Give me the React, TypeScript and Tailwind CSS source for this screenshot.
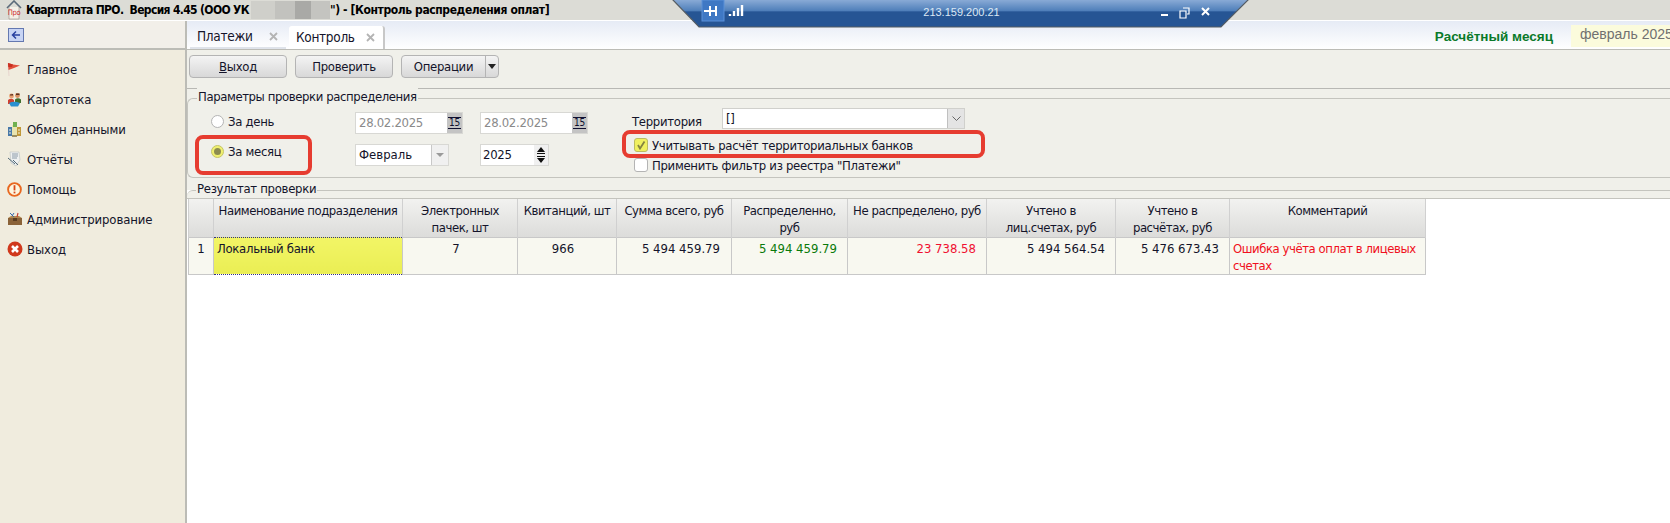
import React from 'react';

const Flag = () => (
  <svg width="15" height="15" viewBox="0 0 15 15">
    <path d="M1 1 L2 14" stroke="#e8d8d0" strokeWidth="1.2" />
    <path d="M1 1 L6 2.5 L13 3.5 L7 6 L1.5 8 Z" fill="#e0503c" />
    <path d="M1 1 L6 2.5 L5 5 L1.3 5 Z" fill="#c83020" />
  </svg>
);

const People = () => (
  <svg width="15" height="15" viewBox="0 0 15 15">
    <circle cx="4.5" cy="4" r="2.4" fill="#e8a070" />
    <circle cx="10.5" cy="3.5" r="2.4" fill="#d89060" />
    <path d="M3 2.5 L6 2 L6 3.5 L3 3.5 Z M9 1.5 L12.5 1.5 L12.5 3 L9 3 Z" fill="#5a3020" />
    <path d="M1 8 Q4 5.5 7 8 L7 12 L1 12 Z" fill="#d04030" />
    <path d="M8 7.5 Q11 5 14 7.5 L14 11 L8 11 Z" fill="#407030" />
    <path d="M2 11 Q7 8.5 13 11 L11 14.5 L4 14.5 Z" fill="#2a90d0" />
  </svg>
);

const Exchange = () => (
  <svg width="15" height="17" viewBox="0 0 15 17">
    <rect x="1" y="6" width="4" height="9" fill="#4878a8" />
    <rect x="5" y="4" width="5" height="11" fill="#e8e4b0" />
    <rect x="10" y="6" width="4" height="9" fill="#c09838" />
    <path d="M6 1 L10 1 L10 6 L6 6 Z" fill="#70b050" />
    <path d="M2 9 h2 M2 12 h2 M11 9 h2 M11 12 h2" stroke="#f0f0e0" strokeWidth="1" />
    <path d="M5 15 L10 15" stroke="#807040" strokeWidth="1.5" />
  </svg>
);

const Report = () => (
  <svg width="15" height="16" viewBox="0 0 15 16">
    <path d="M3 1 L12 1 L13 9 L9 15 L4 12 Z" fill="#eef0f0" stroke="#b8c0c0" strokeWidth="0.6" />
    <path d="M5 3 h6 M5 5 h6 M5 7 h5" stroke="#8090a0" strokeWidth="0.9" />
    <path d="M1 7 L8 13 M6 9 L11 14" stroke="#506878" strokeWidth="1" />
  </svg>
);

const Help = () => (
  <svg width="15" height="15" viewBox="0 0 15 15">
    <circle cx="7.5" cy="7.5" r="6.4" fill="#fdf6e0" stroke="#e86820" strokeWidth="1.9" />
    <rect x="6.6" y="3.2" width="1.8" height="5.2" fill="#d84818" />
    <rect x="6.6" y="9.6" width="1.8" height="1.8" fill="#d84818" />
  </svg>
);

const Tools = () => (
  <svg width="16" height="14" viewBox="0 0 16 14">
    <path d="M1 6 L15 6 L15 13 L1 13 Z" fill="#8a6238" />
    <path d="M1 6 L4 4 L12 4 L15 6 Z" fill="#b08850" />
    <rect x="6" y="6" width="4" height="3" fill="#5a3c20" />
    <path d="M3 1 L7 5 M7 1 L5 4" stroke="#3868a8" strokeWidth="1" />
    <path d="M11 1 L10 5" stroke="#c84030" strokeWidth="1.2" />
  </svg>
);

const ExitIcon = () => (
  <svg width="16" height="16" viewBox="0 0 16 16">
    <circle cx="8" cy="8" r="7.5" fill="#d0381c" />
    <path d="M5 5 L11 11 M11 5 L5 11" stroke="#fff" strokeWidth="2.6" />
  </svg>
);

const menu = [
  { label: 'Главное', icon: <Flag /> },
  { label: 'Картотека', icon: <People /> },
  { label: 'Обмен данными', icon: <Exchange /> },
  { label: 'Отчёты', icon: <Report /> },
  { label: 'Помощь', icon: <Help /> },
  { label: 'Администрирование', icon: <Tools /> },
  { label: 'Выход', icon: <ExitIcon /> },
];

const Tab = ({ label, active }: { label: string; active?: boolean }) => (
  <div
    className={`w-[96px] h-[23px] pl-[7px] pr-[8px] flex items-center justify-between rounded-t-[3px] ${
      active ? 'bg-white border-r-2 border-[#c8c8c8]' : 'border-b-2 border-[#dfe3ea]'
    }`}
  >
    <span>{label}</span>
    <svg width="9" height="9" viewBox="0 0 9 9">
      <path d="M1 1 L8 8 M8 1 L1 8" stroke="#b4b4b4" strokeWidth="1.8" />
    </svg>
  </div>
);

const Btn = ({ children }: { children: React.ReactNode }) => (
  <div className="w-[98px] h-[23px] flex items-center justify-center rounded-[4px] border border-[#b4b4b4] bg-gradient-to-b from-[#f4f4f4] to-[#d8d8d8]">
    {children}
  </div>
);

const DateField = () => (
  <div className="w-[108px] h-[22px] flex bg-white border border-[#d8d8d4] text-[#8a8a8a]">
    <span className="flex-1 pl-[3px] leading-[20px]">28.02.2025</span>
    <div className="w-[15px] bg-[#c4c4c4] flex items-center justify-center">
      <span className="text-[10px] leading-[10px] text-[#101030] border-b border-t border-[#101030] px-[1px]">15</span>
    </div>
  </div>
);

const Radio = ({ label, checked }: { label: string; checked?: boolean }) => (
  <div className="h-[22px] flex items-center">
    <div
      className={`w-[13px] h-[13px] rounded-full border flex items-center justify-center ${
        checked ? 'bg-[#f0f070] border-[#c4c468]' : 'bg-white border-[#b4b4b4]'
      }`}
    >
      {checked && <div className="w-[7px] h-[7px] rounded-full bg-[#8c8c50]" />}
    </div>
    <span className="ml-[4px]">{label}</span>
  </div>
);

const Check = ({ label, checked }: { label: string; checked?: boolean }) => (
  <div className="h-[14px] flex items-center">
    <div
      className={`w-[14px] h-[14px] rounded-[3px] border flex items-center justify-center ${
        checked ? 'bg-[#f0f060] border-[#bcbc60]' : 'bg-white border-[#b4b4b4]'
      }`}
    >
      {checked && (
        <svg width="10" height="10" viewBox="0 0 10 10">
          <path d="M2 5 L4 8.5 L8.5 1.5" fill="none" stroke="#848440" strokeWidth="1.8" />
        </svg>
      )}
    </div>
    <span className="ml-[4px]">{label}</span>
  </div>
);

const columns: { label: React.ReactNode; width: string }[] = [
  { label: '', width: 'w-[25px]' },
  { label: 'Наименование подразделения', width: 'w-[189px]' },
  { label: <>Электронных<br />пачек, шт</>, width: 'w-[115px]' },
  { label: 'Квитанций, шт', width: 'w-[99px]' },
  { label: 'Сумма всего, руб', width: 'w-[115px]' },
  { label: <>Распределенно,<br />руб</>, width: 'w-[116px]' },
  { label: 'Не распределено, руб', width: 'w-[139px]' },
  { label: <>Учтено в<br />лиц.счетах, руб</>, width: 'w-[129px]' },
  { label: <>Учтено в<br />расчётах, руб</>, width: 'w-[114px]' },
  { label: 'Комментарий', width: 'w-[196px]' },
];

export default function App() {
  return (
    <div className="relative w-[1670px] h-[523px] overflow-hidden flex flex-col bg-white text-[13px] leading-[17px] tracking-[-0.3px] text-[#14142a] font-['DejaVu_Sans_Condensed','Noto_Sans',sans-serif]">
      {/* title bar */}
      <div className="h-[21px] shrink-0 bg-[#dcdcd6] border-b border-white flex items-center pl-[6px] font-bold text-[12px] text-black">
        <svg width="16" height="20" viewBox="0 0 16 20" className="shrink-0">
          <path d="M1 8 L8 1 L15 8" fill="none" stroke="#5a6a7a" strokeWidth="1.6" />
          <path d="M3 7 L3 19 L13 19 L13 7" fill="#f4f0e8" stroke="#9a8a80" strokeWidth="0.6" />
          <text x="8" y="15" textAnchor="middle" fontSize="7.5" fontWeight="400" fill="#d03030">Про</text>
        </svg>
        <span className="ml-[4px] w-[225px] shrink-0 whitespace-pre tracking-[-0.65px]">Квартплата ПРО.  Версия 4.45 (ООО УК</span>
        <div className="flex h-[18px] w-[79px] shrink-0">
          <div className="w-[24px] bg-[#cfcfca]" />
          <div className="w-[20px] bg-[#c2c2be]" />
          <div className="w-[16px] bg-[#a9a9a6]" />
          <div className="w-[19px] bg-[#c4c4c0]" />
        </div>
        <span className="whitespace-pre tracking-[-0.4px]">") - [Контроль распределения оплат]</span>
      </div>

      <div className="flex flex-1 min-h-0">
        {/* left menu */}
        <aside className="w-[185px] shrink-0 flex flex-col bg-[#f0ecde] tracking-[-0.1px]">
          <div className="h-[29px] shrink-0 bg-[#f2efe9] border-b-2 border-[#bcbcb6] pl-[8px] flex items-center">
            <svg width="16" height="15" viewBox="0 0 16 15">
              <rect x="0.5" y="1.5" width="15" height="13" fill="#c8d4f4" stroke="#6478b0" />
              <path d="M12 8 L5 8 M8 4.5 L4.5 8 L8 11.5" fill="none" stroke="#2840a0" strokeWidth="1.5" />
            </svg>
          </div>
          <nav className="flex flex-col pt-[4px]">
            {menu.map(item => (
              <div key={item.label} className="h-[30px] flex items-center">
                <div className="w-[27px] shrink-0 pl-[7px] flex items-center">{item.icon}</div>
                <span>{item.label}</span>
              </div>
            ))}
          </nav>
        </aside>

        <main className="flex-1 min-w-0 flex flex-col border-l-2 border-[#bcbcb6]">
          {/* tabs row */}
          <div className="h-[29px] shrink-0 flex items-end justify-between bg-gradient-to-b from-[#e6ebf5] to-white border-b border-[#bcbcb6] pl-[3px]">
            <div className="flex gap-[3px] text-[13.5px]">
              <Tab label="Платежи" />
              <Tab label="Контроль" active />
            </div>
            <div className="flex items-start h-[25px] self-start mt-[4px] tracking-normal">
              <span className="mt-[3px] font-['Liberation_Sans',sans-serif] font-bold text-[13.5px] text-[#0a7a2a]">Расчётный месяц</span>
              <div className="ml-[18px] w-[99px] h-[22px] bg-[#fbfbdc] pl-[9px] overflow-hidden whitespace-nowrap font-['Liberation_Sans',sans-serif] text-[14px] leading-[18px] text-[#707070]">февраль 2025</div>
            </div>
          </div>

          {/* toolbar */}
          <div className="h-[39px] shrink-0 bg-[#f0f0ea] border-b border-[#b8b8b4] pl-[2px] pt-[5px] flex gap-[8px]">
            <Btn><span><u>В</u>ыход</span></Btn>
            <Btn>Проверить</Btn>
            <div className="w-[98px] h-[23px] flex items-center rounded-[4px] border border-[#b4b4b4] bg-gradient-to-b from-[#f4f4f4] to-[#d8d8d8]">
              <span className="w-[83px] text-center">Операции</span>
              <div className="flex-1 h-full border-l border-[#b4b4b4] flex items-center justify-center">
                <svg width="8" height="5" viewBox="0 0 8 5"><path d="M0 0 L8 0 L4 5 Z" fill="#222" /></svg>
              </div>
            </div>
          </div>

          {/* params group */}
          <div className="h-[101px] shrink-0 bg-[#f0f0ea] pt-[9px]">
            <div className="h-[80px] border-t border-l border-b border-[#c4c4be] rounded-l-[6px]">
              <div className="-mt-[11px] ml-[9px] w-fit px-[1px] bg-[#f0f0ea] leading-[17px] tracking-[-0.4px]">Параметры проверки распределения</div>
              <div className="flex ml-[23px]">
                <div className="w-[144px] pt-[5px] flex flex-col gap-[8px]">
                  <Radio label="За день" />
                  <Radio label="За месяц" checked />
                </div>
                <div className="w-[125px] pt-[7px] flex flex-col gap-[10px]">
                  <DateField />
                  <div className="w-[94px] h-[22px] flex bg-white border border-[#d8d8d4] tracking-normal">
                    <span className="flex-1 pl-[3px] leading-[20px]">Февраль</span>
                    <div className="w-[17px] bg-[#f0f0f0] border-l border-[#c8c8c8] flex items-center justify-center">
                      <svg width="8" height="4" viewBox="0 0 8 4"><path d="M0 0 L8 0 L4 4 Z" fill="#9a9a9a" /></svg>
                    </div>
                  </div>
                </div>
                <div className="w-[152px] pt-[7px] flex flex-col gap-[10px]">
                  <DateField />
                  <div className="w-[69px] h-[22px] flex bg-white border border-[#d8d8d4]">
                    <span className="flex-1 pl-[2px] leading-[20px]">2025</span>
                    <div className="w-[14px] bg-[#f0f0f0] flex flex-col items-center justify-center gap-[2px]">
                      <svg width="8" height="7" viewBox="0 0 8 7"><path d="M0 5 L8 5 L4 0 Z M0 6 h8 v1 h-8 Z" fill="#111" /></svg>
                      <svg width="8" height="7" viewBox="0 0 8 7"><path d="M0 2 L8 2 L4 7 Z M0 0 h8 v1 h-8 Z" fill="#111" /></svg>
                    </div>
                  </div>
                </div>
                <div className="flex flex-col pt-[3px]">
                  <div className="flex items-start h-[21px]">
                    <span className="w-[90px] pt-[5px]">Территория</span>
                    <div className="w-[243px] h-[21px] flex bg-white border border-[#d0d0cc]">
                      <span className="flex-1 pl-[3px] leading-[19px]">[]</span>
                      <div className="w-[17px] bg-[#e4e4e4] border-l border-[#c0c0c0] flex items-center justify-center">
                        <svg width="9" height="5" viewBox="0 0 9 5"><path d="M0.5 0.5 L4.5 4.5 L8.5 0.5" fill="none" stroke="#666" /></svg>
                      </div>
                    </div>
                  </div>
                  <div className="mt-[9px] ml-[2px] flex flex-col gap-[6px]">
                    <Check label="Учитывать расчёт территориальных банков" checked />
                    <Check label='Применить фильтр из реестра "Платежи"' />
                  </div>
                </div>
              </div>
            </div>
          </div>

          {/* results group */}
          <div className="h-[8px] shrink-0 bg-[#f0f0ea] border-t border-[#c4c4be] rounded-tl-[6px]">
            <div className="-mt-[11px] ml-[9px] w-fit px-[1px] bg-[#f0f0ea] leading-[17px]">Результат проверки</div>
          </div>
          <div className="flex-1 bg-white border-t border-[#c4c4be] pl-[1px]">
            <table className="table-fixed border-collapse w-[1237px]">
              <thead>
                <tr className="h-[38px] bg-gradient-to-b from-[#f2f2f0] to-[#dcdcda]">
                  {columns.map((c, i) => (
                    <th key={i} className={`${c.width} border-r border-[#d0d0d0] p-0 pt-[3px] align-top font-normal text-center leading-[17px] tracking-[-0.45px] ${i === 0 ? 'border-l' : ''}`}>
                      {c.label}
                    </th>
                  ))}
                </tr>
              </thead>
              <tbody>
                <tr className="h-[37px] bg-[#f8f8f0] align-top tracking-normal">
                  <td className="border border-[#c8c8c8] pt-[2px] text-center">1</td>
                  <td className="border border-dotted border-[#30308a] bg-gradient-to-b from-[#f2f566] to-[#eaee54] pt-[2px] pl-[3px] tracking-[-0.3px]">Локальный банк</td>
                  <td className="border border-[#c8c8c8] pt-[2px] pr-[8px] text-center">7</td>
                  <td className="border border-[#c8c8c8] pt-[2px] pr-[8px] text-center">966</td>
                  <td className="border border-[#c8c8c8] pt-[2px] pr-[11px] text-right">5 494 459.79</td>
                  <td className="border border-[#c8c8c8] pt-[2px] pr-[10px] text-right text-[#0a7a0a]">5 494 459.79</td>
                  <td className="border border-[#c8c8c8] pt-[2px] pr-[10px] text-right text-[#f01030]">23 738.58</td>
                  <td className="border border-[#c8c8c8] pt-[2px] pr-[10px] text-right">5 494 564.54</td>
                  <td className="border border-[#c8c8c8] pt-[2px] pr-[10px] text-right">5 476 673.43</td>
                  <td className="border border-[#c8c8c8] pt-[2px] pl-[3px] pr-0 text-[#f01020] tracking-[-0.45px]">Ошибка учёта оплат в лицевых счетах</td>
                </tr>
              </tbody>
            </table>
          </div>
        </main>
      </div>

      {/* remote session bar over the title */}
      <div className="absolute left-[672px] top-0 w-[577px] h-[28px] text-white">
        <svg width="577" height="28" viewBox="0 0 577 28" className="absolute inset-0">
          <defs>
            <linearGradient id="barTop" x1="0" y1="0" x2="0" y2="1">
              <stop offset="0" stopColor="#8eaed8" />
              <stop offset="0.42" stopColor="#4f7fba" />
              <stop offset="0.46" stopColor="#265594" />
              <stop offset="1" stopColor="#265594" />
            </linearGradient>
          </defs>
          <polygon points="0,-1 577,-1 549,27 27,27" fill="url(#barTop)" stroke="#555c62" strokeWidth="1.2" />
          <rect x="30" y="0" width="22" height="21" fill="#3f78c4" stroke="#5a90d8" />
          <path d="M38 11 h-6 M38 6 v10 M44 6 v10 M38 11 h6" stroke="#fff" strokeWidth="2" fill="none" />
          <path d="M58 16 v-2 M62 16 v-5 M66 16 v-8 M70 16 v-11" stroke="#fff" strokeWidth="2.4" />
          <path d="M489 15 h7" stroke="#fff" strokeWidth="2" />
          <path d="M511 8 h6 v6 h-2 M508 11 h6 v7 h-6 Z" stroke="#fff" strokeWidth="1.2" fill="none" />
          <path d="M530 8 L537 15 M537 8 L530 15" stroke="#fff" strokeWidth="2" />
        </svg>
        <span className="relative block text-center text-[11px] leading-[24px] tracking-normal font-['Liberation_Sans',sans-serif] text-[#dce8f4] pl-[2px]">213.159.200.21</span>
      </div>

      {/* red annotations over the form */}
      <div className="absolute left-[195px] top-[135px] w-[117px] h-[40px] border-4 border-[#e63c30] rounded-[8px]" />
      <div className="absolute left-[622px] top-[130px] w-[363px] h-[28px] border-4 border-[#e63c30] rounded-[8px]" />
    </div>
  );
}
